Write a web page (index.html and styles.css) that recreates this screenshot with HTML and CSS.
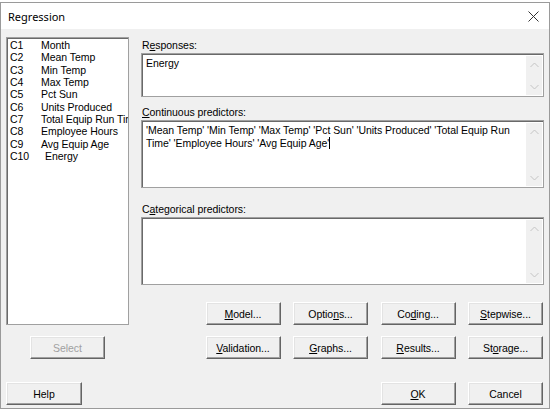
FILE: index.html
```html
<!DOCTYPE html>
<html>
<head>
<meta charset="utf-8">
<link rel="stylesheet" href="styles.css">
</head>
<body>
<div class="window">
  <div class="titlebar">
    <span class="title">Regression</span>
    <svg class="close" width="11" height="11" viewBox="0 0 11 11"><path d="M0.5 0.5 L10.5 10.5 M10.5 0.5 L0.5 10.5" stroke="#333" stroke-width="1" fill="none"/></svg>
  </div>
  <div class="dialog">
    <div class="main">
      <div class="left">
        <div class="listbox">
          <div class="row"><span class="cid">C1</span><span>Month</span></div>
          <div class="row"><span class="cid">C2</span><span>Mean Temp</span></div>
          <div class="row"><span class="cid">C3</span><span>Min Temp</span></div>
          <div class="row"><span class="cid">C4</span><span>Max Temp</span></div>
          <div class="row"><span class="cid">C5</span><span>Pct Sun</span></div>
          <div class="row"><span class="cid">C6</span><span>Units Produced</span></div>
          <div class="row"><span class="cid">C7</span><span>Total Equip Run Time</span></div>
          <div class="row"><span class="cid">C8</span><span>Employee Hours</span></div>
          <div class="row"><span class="cid">C9</span><span>Avg Equip Age</span></div>
          <div class="row"><span class="cid">C10</span><span class="shift">Energy</span></div>
        </div>
        <button class="btn select" disabled>Select</button>
      </div>
      <div class="right">
        <div class="label">R<u>e</u>sponses:</div>
        <div class="field short">
          <div class="text">Energy</div>
          <div class="scroll"><svg width="9" height="6" viewBox="0 0 9 6"><path d="M0.5 5 L4.5 1 L8.5 5" stroke="#c4c4c4" fill="none"/></svg><svg width="9" height="6" viewBox="0 0 9 6"><path d="M0.5 1 L4.5 5 L8.5 1" stroke="#c4c4c4" fill="none"/></svg></div>
        </div>
        <div class="label gap1"><u>C</u>ontinuous predictors:</div>
        <div class="field tall">
          <div class="text">'Mean Temp' 'Min Temp' 'Max Temp' 'Pct Sun' 'Units Produced' 'Total Equip Run Time' 'Employee Hours' 'Avg Equip Age'<span class="caret"></span></div>
          <div class="scroll"><svg width="9" height="6" viewBox="0 0 9 6"><path d="M0.5 5 L4.5 1 L8.5 5" stroke="#c4c4c4" fill="none"/></svg><svg width="9" height="6" viewBox="0 0 9 6"><path d="M0.5 1 L4.5 5 L8.5 1" stroke="#c4c4c4" fill="none"/></svg></div>
        </div>
        <div class="label gap2">C<u>a</u>tegorical predictors:</div>
        <div class="field tall">
          <div class="text"></div>
          <div class="scroll"><svg width="9" height="6" viewBox="0 0 9 6"><path d="M0.5 5 L4.5 1 L8.5 5" stroke="#c4c4c4" fill="none"/></svg><svg width="9" height="6" viewBox="0 0 9 6"><path d="M0.5 1 L4.5 5 L8.5 1" stroke="#c4c4c4" fill="none"/></svg></div>
        </div>
        <div class="buttons">
          <button class="btn"><u>M</u>odel...</button>
          <button class="btn">Optio<u>n</u>s...</button>
          <button class="btn">Co<u>d</u>ing...</button>
          <button class="btn"><u>S</u>tepwise...</button>
          <button class="btn"><u>V</u>alidation...</button>
          <button class="btn"><u>G</u>raphs...</button>
          <button class="btn"><u>R</u>esults...</button>
          <button class="btn">St<u>o</u>rage...</button>
        </div>
      </div>
    </div>
    <div class="bottom">
      <button class="btn help">Help</button>
      <div class="okcancel">
        <button class="btn"><u>O</u>K</button>
        <button class="btn">Cancel</button>
      </div>
    </div>
  </div>
</div>
</body>
</html>
```
FILE: styles.css
```css
html, body {
  margin: 0;
  padding: 0;
  background: #ffffff;
}
body {
  width: 550px;
  height: 411px;
  overflow: hidden;
  font-family: "Liberation Sans", Arial, sans-serif;
  font-size: 10.5px;
  letter-spacing: -0.05px;
  color: #000;
}
.window {
  margin-top: 2px;
  width: 548px;
  height: 405px;
  border: 1px solid #9a9a9a;
  display: flex;
  flex-direction: column;
  background: #f0f0f0;
}
.titlebar {
  height: 26px;
  background: #ffffff;
  display: flex;
  align-items: center;
  justify-content: space-between;
  padding: 0 10px 0 7px;
}
.title {
  font-family: "Noto Sans", "Open Sans", sans-serif;
  font-size: 11px;
  letter-spacing: 0;
  color: #000;
  margin-top: 1px;
}
.close {
  margin-top: 1px;
}
.dialog {
  flex: 1;
  display: flex;
  flex-direction: column;
  padding: 8px 5px 0 5px;
}
.main {
  display: flex;
  gap: 12px;
}
.left {
  width: 123px;
  display: flex;
  flex-direction: column;
}
.listbox {
  box-sizing: border-box;
  height: 288px;
  background: #fff;
  border: 1px solid #a0a0a0;
  box-shadow: inset 1px 1px 0 #696969;
  padding: 1px 0 0 3px;
  overflow: hidden;
  white-space: nowrap;
}
.row {
  height: 12.33px;
  line-height: 12px;
  display: flex;
}
.cid {
  width: 31px;
  flex: none;
}
.shift {
  margin-left: 4px;
}
.btn {
  font-family: "Liberation Sans", Arial, sans-serif;
  font-size: 10.5px;
  letter-spacing: -0.05px;
  color: #000;
  width: 75px;
  height: 23px;
  padding: 0;
  background: #f0f0f0;
  border: 1px solid;
  border-color: #ffffff #646464 #646464 #ffffff;
  box-shadow: inset -1px -1px 0 #a0a0a0, inset 1px 1px 0 #e3e3e3;
  text-align: center;
}
.btn u {
  text-decoration-thickness: 1px;
  text-underline-offset: 1px;
}
.select {
  margin: 11px 0 0 24px;
  color: #a0a0a0;
}
.right {
  flex: 1;
  display: flex;
  flex-direction: column;
}
.label {
  height: 16px;
  line-height: 16px;
  padding-left: 1px;
}
.label u {
  text-underline-offset: 1px;
}
.gap1 {
  margin-top: 7px;
}
.gap2 {
  margin-top: 13px;
}
.field {
  display: flex;
  background: #fff;
  border: 1px solid #a0a0a0;
  box-shadow: inset 1px 1px 0 #696969;
  padding: 2px 1px 1px 2px;
  box-sizing: border-box;
}
.short {
  height: 44px;
}
.tall {
  height: 68px;
}
.text {
  flex: 1;
  padding: 1px 0 0 2px;
  line-height: 13px;
}
.caret {
  display: inline-block;
  width: 1px;
  height: 12px;
  background: #000;
  vertical-align: -2px;
}
.scroll {
  width: 16px;
  background: #f0f0f0;
  display: flex;
  flex-direction: column;
  justify-content: space-between;
  align-items: center;
  padding: 6px 0 5px;
}
.buttons {
  margin-top: 17px;
  display: grid;
  grid-template-columns: repeat(4, 75px);
  column-gap: 12.5px;
  row-gap: 11px;
  justify-content: end;
  padding-right: 1px;
}
.bottom {
  margin-top: 23px;
  display: flex;
  justify-content: space-between;
  padding-right: 1px;
}
.help {
  width: 76px;
}
.okcancel {
  display: flex;
  gap: 12.5px;
}
```
